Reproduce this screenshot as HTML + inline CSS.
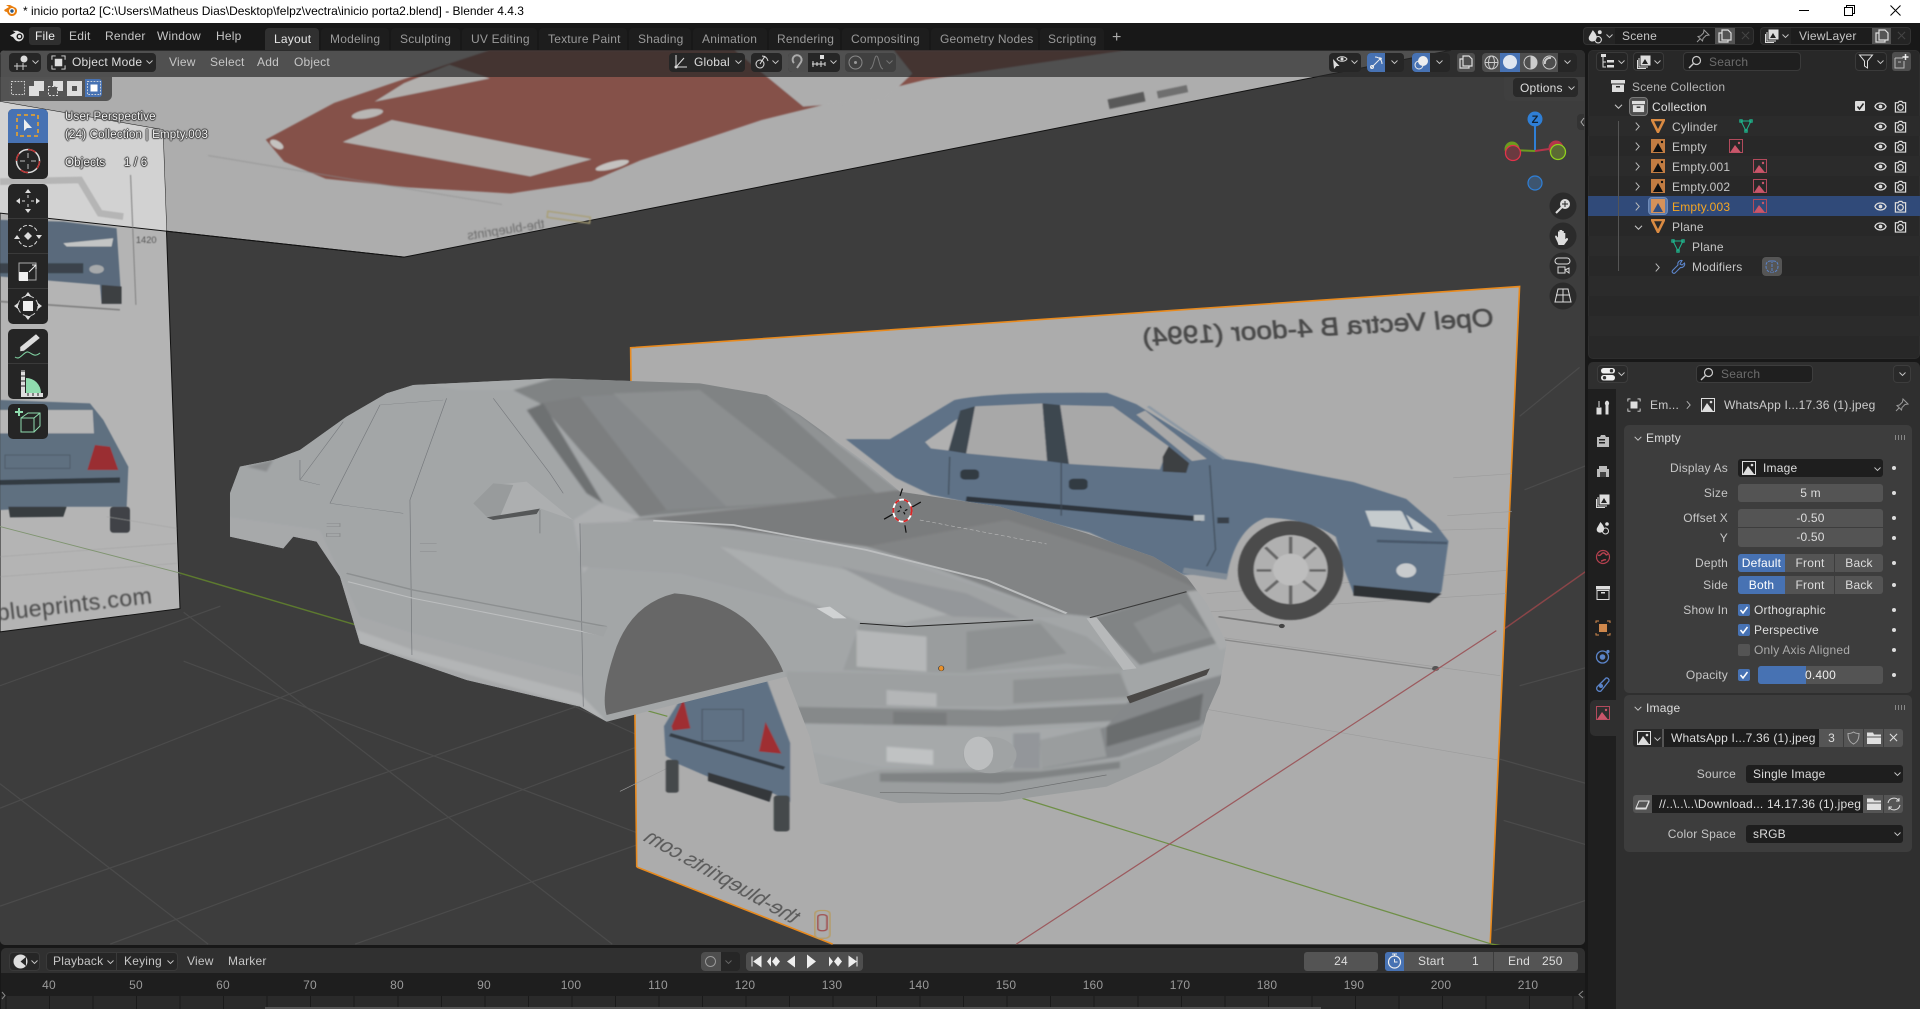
<!DOCTYPE html>
<html><head><meta charset="utf-8"><title>Blender</title>
<style>
html,body{margin:0;padding:0;width:1920px;height:1009px;overflow:hidden;background:#181818;font-family:"Liberation Sans",sans-serif}
.t{position:absolute;white-space:nowrap;font-size:12px;line-height:14px;color:#c6c6c6;letter-spacing:.2px}
.b{position:absolute;box-sizing:border-box}
.d{background:#1d1d1d;border-radius:4px}
.g{background:#545454;border-radius:3px}
.r{text-align:right}
.c{text-align:center}
.o{color:#f4f4f4;text-shadow:0 0 1px #333,0 0 1px #333,1px 0 1px #444,-1px 0 1px #444,0 1px 1px #444,0 -1px 1px #444}
svg.i{position:absolute;overflow:visible}
.row{position:absolute;left:1588px;width:332px;height:20px}
.dot{position:absolute;width:4px;height:4px;border-radius:50%;background:#ddd;left:1892px}
</style></head><body>
<svg width="0" height="0" style="position:absolute"><defs>
<symbol id="img" viewBox="0 0 14 14"><rect x=".5" y=".5" width="13" height="13" fill="none" stroke="currentColor" stroke-width="1"/><path d="M1 13 6 5l6 8z" fill="currentColor"/><circle cx="10" cy="4" r="1.3" fill="currentColor"/></symbol>
<symbol id="eye" viewBox="0 0 14 14"><path d="M1 7c2-5 10-5 12 0-2 5-10 5-12 0z" fill="none" stroke="#ddd" stroke-width="1.4"/><circle cx="7" cy="7" r="2" fill="#ddd"/></symbol>
<symbol id="cam" viewBox="0 0 14 14"><path d="M1.5 3h3l1-1.500h3l1 1.500h3v10h-11z" fill="none" stroke="#ddd" stroke-width="1.3"/><circle cx="7" cy="8" r="3" fill="none" stroke="#ddd" stroke-width="1.3"/></symbol>
<symbol id="tri" viewBox="0 0 14 14"><path d="M1 1h12L7 13z" fill="none" stroke="#d98a42" stroke-width="2.600"/></symbol>
<symbol id="mesh" viewBox="0 0 14 14"><path d="M2 2h10L7 12z" fill="none" stroke="#1fb58d" stroke-width="1"/><rect x="0.800" y="0.800" width="2.400" height="2.400" fill="none" stroke="#1fb58d"/><rect x="10.800" y="0.800" width="2.400" height="2.400" fill="none" stroke="#1fb58d"/><rect x="5.800" y="10.800" width="2.400" height="2.400" fill="none" stroke="#1fb58d"/></symbol>
<symbol id="oimg" viewBox="0 0 14 14"><rect width="14" height="14" fill="#c27c42"/><path d="M2 13 7 4l5 9z" fill="#111"/><circle cx="11" cy="3" r="1.200" fill="#111"/></symbol>
<symbol id="dimg" viewBox="0 0 14 14"><rect x=".5" y=".5" width="13" height="13" fill="none" stroke="#b24a5c"/><path d="M1 13.500 6 6l6 7.500z" fill="#c9566a"/><circle cx="10" cy="4" r="1.200" fill="#c9566a"/></symbol>
<symbol id="coll" viewBox="0 0 14 14"><rect x="0" y="1" width="14" height="3.500" fill="#ddd"/><path d="M1 5.500h12V13H1z" fill="#ddd"/><rect x="5" y="7" width="4" height="1.500" fill="#2b2b2b"/></symbol>
<symbol id="cr" viewBox="0 0 8 12"><path d="M2 1.500 6 6l-4 4.500" fill="none" stroke="#bbb" stroke-width="1.100"/></symbol>
<symbol id="cd" viewBox="0 0 12 8"><path d="M2 2l4 4 4-4" fill="none" stroke="#c8c8c8" stroke-width="1.200"/></symbol>
<symbol id="search" viewBox="0 0 14 14"><circle cx="8.500" cy="5.500" r="4" fill="none" stroke="#ccc" stroke-width="1.200"/><path d="M5.500 8.500 1 13" stroke="#ccc" stroke-width="1.400"/></symbol>
<symbol id="folder" viewBox="0 0 14 14"><path d="M0 1.500h6l1 2h7v2H0z" fill="#e0e0e0"/><path d="M0 6.500h14V13H0z" fill="#e0e0e0"/></symbol>
<symbol id="pin" viewBox="0 0 14 14"><path d="M8 1l5 5-3 .5-3 3L6.500 12 2 7.500 4.500 7l3-3zM4 10l-3 3" fill="none" stroke="#999" stroke-width="1"/></symbol>
<symbol id="copy" viewBox="0 0 14 14"><path d="M4 1h6l3 3v7H4zM4 4H1v9h9v-2" fill="none" stroke="#ddd" stroke-width="1.200"/></symbol>
<symbol id="x" viewBox="0 0 10 10"><path d="M1 1l8 8M9 1l-8 8" stroke="currentColor" stroke-width="1.200"/></symbol>
<symbol id="scene" viewBox="0 0 14 14"><path d="M4.500 1C7 4 8.500 6 8 8.500 7.500 11 5 12 3 11.500 1 11 .2 9 1 7z" fill="#ddd"/><circle cx="11" cy="3" r="1.800" fill="#ddd"/><circle cx="9.500" cy="10" r="3" fill="none" stroke="#ddd"/></symbol>
<symbol id="vl" viewBox="0 0 14 14"><rect x="3.500" y=".5" width="10" height="10" fill="#ddd"/><path d="M5 9l3-5 3 5z" fill="#222"/><path d="M2 3v9h9M.5 5v8.500H9" fill="none" stroke="#ddd"/></symbol>
<symbol id="selb" viewBox="0 0 16 16"><rect x=".5" y=".5" width="15" height="15" fill="none" stroke="#ddd" stroke-dasharray="2 1.500"/></symbol>
</defs></svg>

<!-- title bar -->
<div class="b" style="left:0;top:0;width:1920px;height:23px;background:#fff"></div>
<svg class="i" style="left:3px;top:3px" width="15" height="15" viewBox="0 0 15 15"><path d="M1 7 6 4 3 2h4l6 3a5 5 0 1 1-8 6l-1-2-2-.5z" fill="#e87d0d"/><circle cx="9" cy="8" r="3" fill="#fff"/><circle cx="9" cy="8" r="1.700" fill="#265787"/></svg>
<div class="t" style="left:23px;top:4px;color:#000;letter-spacing:0">* inicio porta2 [C:\Users\Matheus Dias\Desktop\felpz\vectra\inicio porta2.blend] - Blender 4.4.3</div>
<div class="b" style="left:1799px;top:10px;width:10px;height:1px;background:#000"></div>
<svg class="i" style="left:1844px;top:5px" width="11" height="11" viewBox="0 0 11 11"><path d="M.5 2.500h8v8h-8zM2.500 2.500v-2h8v8h-2" fill="none" stroke="#000"/></svg>
<svg class="i" style="left:1890px;top:5px" width="11" height="11" viewBox="0 0 11 11"><path d="M.5.5l10 10M10.500.5l-10 10" stroke="#000"/></svg>

<!-- top bar -->
<div class="b" style="left:0;top:23px;width:1920px;height:27px;background:#181818"></div>
<svg class="i" style="left:9px;top:28px" width="18" height="16" viewBox="0 0 18 16"><path d="M1 7.500 6.500 4.500 3.500 2.700H8.500L14 5.500a5 5 0 1 1-8.500 5.500L4 9 2.500 8.500z" fill="#e4e4e4"/><circle cx="10.500" cy="8.500" r="3" fill="#181818"/><circle cx="10.500" cy="8.500" r="1.600" fill="#e4e4e4"/></svg>
<div class="b" style="left:29px;top:27px;width:32px;height:18px;background:#2f2f2f;border-radius:3px"></div>
<div class="t" style="left:35px;top:29px;color:#eee">File</div>
<div class="t" style="left:69px;top:29px">Edit</div>
<div class="t" style="left:105px;top:29px">Render</div>
<div class="t" style="left:157px;top:29px">Window</div>
<div class="t" style="left:216px;top:29px">Help</div>
<div class="b" style="left:265px;top:28px;width:54px;height:22px;background:#303030;border-radius:4px 4px 0 0"></div>
<div class="b" style="left:321px;top:28px;width:68px;height:22px;background:#1d1d1d;border-radius:4px 4px 0 0"></div>
<div class="b" style="left:391px;top:28px;width:69px;height:22px;background:#1d1d1d;border-radius:4px 4px 0 0"></div>
<div class="b" style="left:462px;top:28px;width:75px;height:22px;background:#1d1d1d;border-radius:4px 4px 0 0"></div>
<div class="b" style="left:539px;top:28px;width:88px;height:22px;background:#1d1d1d;border-radius:4px 4px 0 0"></div>
<div class="b" style="left:629px;top:28px;width:62px;height:22px;background:#1d1d1d;border-radius:4px 4px 0 0"></div>
<div class="b" style="left:693px;top:28px;width:74px;height:22px;background:#1d1d1d;border-radius:4px 4px 0 0"></div>
<div class="b" style="left:769px;top:28px;width:71px;height:22px;background:#1d1d1d;border-radius:4px 4px 0 0"></div>
<div class="b" style="left:842px;top:28px;width:87px;height:22px;background:#1d1d1d;border-radius:4px 4px 0 0"></div>
<div class="b" style="left:931px;top:28px;width:107px;height:22px;background:#1d1d1d;border-radius:4px 4px 0 0"></div>
<div class="b" style="left:1040px;top:28px;width:64px;height:22px;background:#1d1d1d;border-radius:4px 4px 0 0"></div>
<div class="t" style="left:274px;top:32px;color:#e6e6e6">Layout</div>
<div class="t" style="left:330px;top:32px;color:#9a9a9a">Modeling</div>
<div class="t" style="left:400px;top:32px;color:#9a9a9a">Sculpting</div>
<div class="t" style="left:471px;top:32px;color:#9a9a9a">UV Editing</div>
<div class="t" style="left:548px;top:32px;color:#9a9a9a">Texture Paint</div>
<div class="t" style="left:638px;top:32px;color:#9a9a9a">Shading</div>
<div class="t" style="left:702px;top:32px;color:#9a9a9a">Animation</div>
<div class="t" style="left:777px;top:32px;color:#9a9a9a">Rendering</div>
<div class="t" style="left:851px;top:32px;color:#9a9a9a">Compositing</div>
<div class="t" style="left:940px;top:32px;color:#9a9a9a">Geometry Nodes</div>
<div class="t" style="left:1048px;top:32px;color:#9a9a9a">Scripting</div>
<div class="t" style="left:1112px;top:31px;color:#aaa;font-size:16px">+</div>

<div class="b d" style="left:1583px;top:27px;width:171px;height:18px;background:#242424;border:1px solid #333"></div>
<div class="b" style="left:1615px;top:28px;width:100px;height:16px;background:#1d1d1d"></div>
<svg class="i" style="left:1588px;top:29px;color:#ddd" width="15" height="15"><use href="#scene"/></svg>
<svg class="i" style="left:1605px;top:33px" width="9" height="6"><use href="#cd"/></svg>
<div class="t" style="left:1622px;top:29px">Scene</div>
<svg class="i" style="left:1696px;top:29px" width="14" height="14"><use href="#pin"/></svg>
<div class="b g" style="left:1715px;top:28px;width:20px;height:16px;border-radius:0"></div>
<svg class="i" style="left:1718px;top:29px" width="14" height="14"><use href="#copy"/></svg>
<svg class="i" style="left:1741px;top:31px;color:#444" width="9" height="9"><use href="#x"/></svg>
<div class="b d" style="left:1760px;top:27px;width:151px;height:18px;background:#242424;border:1px solid #333"></div>
<div class="b" style="left:1791px;top:28px;width:81px;height:16px;background:#1d1d1d"></div>
<svg class="i" style="left:1765px;top:29px;color:#ddd" width="14" height="14"><use href="#vl"/></svg>
<svg class="i" style="left:1781px;top:33px" width="9" height="6"><use href="#cd"/></svg>
<div class="t" style="left:1799px;top:29px">ViewLayer</div>
<div class="b g" style="left:1872px;top:28px;width:19px;height:16px;border-radius:0"></div>
<svg class="i" style="left:1875px;top:29px" width="14" height="14"><use href="#copy"/></svg>
<svg class="i" style="left:1897px;top:31px;color:#444" width="9" height="9"><use href="#x"/></svg>

<!-- 3D viewport -->
<div class="b" style="left:0;top:50px;width:1585px;height:895px;overflow:hidden;border-radius:5px;background:#3d3d3d">
<svg style="position:absolute;left:0;top:-50px" width="1920" height="1009" viewBox="0 0 1568 824">
<defs>
<filter id="bl" x="-5%" y="-5%" width="110%" height="110%"><feGaussianBlur stdDeviation=".7"/></filter>
<filter id="bl2" x="-5%" y="-5%" width="110%" height="110%"><feGaussianBlur stdDeviation="1.200"/></filter>
<filter id="mb" x="-5%" y="-5%" width="110%" height="110%"><feGaussianBlur stdDeviation="1.500 3"/></filter>
<clipPath id="mc"><polygon points="45,530 45,400 60,320 110,300 150,270 220,170 280,100 320,75 530,55 750,70 850,105 900,165 1000,310 1050,395 1200,440 1330,520 1430,590 1480,650 1510,730 1540,850 1530,970 1510,1060 1500,1140 1440,1210 1360,1280 1200,1325 1050,1330 930,1270 915,1130 880,950 610,1085 570,1040 400,960 240,850 210,650 175,545 140,530 125,565"/></clipPath>
</defs>
<rect width="1568" height="824" fill="#3d3d3d"/>
<!-- floor grid -->
<g stroke="#4b4b4b" stroke-width="1" fill="none">
<path d="M0 660 520 455M0 740 520 560M90 771 520 610M290 771 520 690M0 560 180 495M148 470 0 430"/>
<path d="M0 640 170 771M150 500 500 771M300 500 520 600M150 540 520 680"/>
<path d="M1241 560 1296 545M1228 670 1296 690M1225 620 1296 640M1290 300 1241 340M1245 400 1296 380M1220 760 1296 735"/>
</g>
<path d="M147 468 520 578" stroke="#5d7a2f" stroke-width="1.200"/>
<path d="M1218 771 1296 785" stroke="#6d8f2f" stroke-width="1.200"/>
<path d="M1296 466 1225 516" stroke="#8a4548" stroke-width="1.200"/>

<!-- ceiling plane -->
<polygon points="0,41 1185,41 330,210 0,174" fill="#adadad" stroke="#111" stroke-width=".8"/>
<g filter="url(#bl)">
<polygon points="217,114 232,132 266,146 333,153 417,158 483,148 523,131 622,98 756,65 919,41 400,41 367,52 273,84" fill="#85514a"/>
<polygon points="280,116 433,144 483,130 320,98" fill="#b2b0ae"/>
<polygon points="306,83 400,64 367,53 330,68" fill="#b2b0ae"/>
<polygon points="600,41 656,87 722,82 745,60 730,41" fill="#adadad"/>
<ellipse cx="300" cy="93" rx="13" ry="3.500" fill="#b8b6b4" transform="rotate(-10 300 93)"/>
<ellipse cx="226" cy="118" rx="6" ry="3" fill="#c4c2c0" transform="rotate(30 226 118)"/>
<ellipse cx="500" cy="135" rx="14" ry="3" fill="#c4c2c0" transform="rotate(-14 500 135)"/>
<path d="M170 127 410 167" stroke="#8a8a8a" stroke-width=".7" fill="none" opacity=".7"/>
<text transform="translate(445 186) rotate(-9) scale(-1 1)" font-size="10.500" fill="#6a6a6a" font-family="Liberation Sans, sans-serif">the-blueprints</text>
<rect x="447" y="175" width="35" height="5" fill="none" stroke="#a89e72" stroke-width="1.100" transform="rotate(8 465 177)"/>
<rect x="905" y="78" width="30" height="8" fill="#444" transform="rotate(-12 920 82)" opacity=".8"/>
<rect x="945" y="72" width="25" height="6" fill="#555" transform="rotate(-12 957 75)" opacity=".7"/>
</g>

<!-- left plane -->
<polygon points="0,83 133,106 147,497 0,516" fill="#b4b4b4" stroke="#111" stroke-width=".8"/>
<polygon points="0,83 133,106 136,189 0,174" fill="#d2d2d2"/>
<path d="M0 174 330 210" stroke="#111" stroke-width=".8"/>
<g transform="translate(0 81.670) scale(.272)" filter="url(#bl2)">
<path d="M0 245 240 240 300 340 370 350" fill="none" stroke="#b5b5b5" stroke-width="20"/>
<polygon points="0,360 190,365 350,385 365,610 305,610 300,555 0,530" fill="#5a6a7c"/>
<polygon points="190,430 340,415 335,440 200,440" fill="#c3c5c5"/>
<polygon points="0,490 250,490 250,520 0,520" fill="#3a424c"/>
<ellipse cx="290" cy="508" rx="22" ry="13" fill="#a6a9ab"/>
<polygon points="305,555 365,560 365,612 305,612" fill="#3c3f43"/>
<path d="M0 605 360 630" stroke="#808080" stroke-width="5"/>
<path d="M392 225 408 615" stroke="#808080" stroke-width="3"/>
<text x="408" y="430" font-size="28" fill="#555" font-family="Liberation Sans, sans-serif">1420</text>
</g>
<g transform="translate(0 326.700) scale(.2722)" filter="url(#bl2)">
<polygon points="0,0 270,10 310,60 385,200 380,320 335,320 200,320 0,330" fill="#5f6f80"/>
<polygon points="0,30 278,30 282,100 0,100" fill="#b6b6b6"/>
<polygon points="285,135 330,140 355,210 262,210" fill="#9a2e32"/>
<polygon points="0,240 360,232 360,248 0,255" fill="#333a42"/>
<rect x="330" y="320" width="60" height="78" rx="10" fill="#3f4347"/>
<polygon points="25,320 200,320 190,350 30,352" fill="#393c40"/>
<rect x="15" y="165" width="195" height="40" fill="none" stroke="#4f5c6a" stroke-width="3"/>
<path d="M0 530 530 490M320 350 530 385M0 470 530 430" stroke="#a0a0a0" stroke-width="1.500" fill="none"/>
</g>
<path d="M0 430 147 468" stroke="#7f9470" stroke-width=".8"/>
<text transform="translate(-2 507) rotate(-6.500)" font-size="19" font-family="Liberation Sans, sans-serif" fill="#4a4a4a" filter="url(#bl)" letter-spacing=".3">blueprints.com</text>

<!-- right plane -->
<polygon points="515,284 1241,234 1217,771 680,771 520,708" fill="#acacac"/>
<path d="M520 708 515 284 1241 234 1217 771M520 708 680 771" fill="none" stroke="#e88a1e" stroke-width="1.300"/>
<g transform="translate(506.300 228.700) scale(.4792 .3437)">
<g stroke="#9c9c9c" stroke-width="1.500" fill="none"><path d="M1000 745 1510 690M1030 850 1500 940M1000 1020 1495 1140M985 790 1510 745M1410 560 1520 550M1420 470 1520 460M0 1215 110 1140M1250 600 1510 590"/></g>
<path d="M1020 800 1130 822" stroke="#777" stroke-width="4" filter="url(#bl)"/><circle cx="1128" cy="822" r="5" fill="#444"/>
<path d="M1030 855 1390 925" stroke="#888" stroke-width="3" filter="url(#bl)"/><circle cx="1390" cy="923" r="6" fill="#555"/>
<g filter="url(#bl2)">
<path d="M385 378 460 378 570 285Q640 265 830 268L880 295 1030 425 1080 435 1250 480 1340 520 1390 580 1412 620 1400 740 1380 765 1250 745 1235 690 1220 610Q1170 565 1100 565 1050 590 1035 700L960 700 800 600 600 530 530 510 470 470Z" fill="#5e7287"/>
<polygon points="520,385 575,330 560,405 530,400" fill="#b0b0b0"/>
<polygon points="605,300 720,293 728,430 590,412" fill="#a8a8a8"/>
<polygon points="750,297 840,300 935,395 920,450 765,437" fill="#a8a8a8"/>
<polygon points="580,310 605,300 590,412 560,405" fill="#3e4650"/>
<polygon points="720,293 750,297 765,437 728,430" fill="#3e4650"/>
<polygon points="925,420 935,395 970,435 965,458 925,455" fill="#3d3f42"/>
<path d="M900 300 1030 425" stroke="#8d99a4" stroke-width="5"/>
<polygon points="895,310 1000,425 975,430 880,320" fill="#a8a8a8"/>
<path d="M590 520 990 568" stroke="#2d353e" stroke-width="12"/>
<rect x="978" y="558" width="18" height="14" fill="#b5bcc0"/><rect x="1018" y="564" width="20" height="14" fill="#39414a"/>
<rect x="580" y="450" width="32" height="24" rx="8" fill="#333a42"/><rect x="765" y="472" width="32" height="26" rx="8" fill="#333a42"/>
<path d="M562 420 560 510M752 430 752 560M1005 440 1015 640 1000 680" stroke="#3f4a55" stroke-width="2" fill="none"/>
<path d="M960 690 1035 705" stroke="#818c97" stroke-width="14"/>
<ellipse cx="1143" cy="690" rx="90" ry="118" fill="#4b4b4b"/>
<ellipse cx="1143" cy="688" rx="63" ry="82" fill="#b0b0b0"/>
<g stroke="#666" stroke-width="6"><path d="M1143 610V650M1143 725V770M1085 690H1110M1175 690H1203M1100 635 1125 668M1186 740 1160 710M1186 635 1160 668M1100 740 1125 710"/></g>
<ellipse cx="1143" cy="688" rx="30" ry="38" fill="#bdbdbd"/>
<polygon points="1270,548 1330,548 1385,600 1280,585" fill="#c5cbcd"/>
<path d="M1335 550 1350 592" stroke="#5e7287" stroke-width="4"/>
<path d="M1290 620 1410 625" stroke="#48586a" stroke-width="6"/>
<circle cx="1340" cy="690" r="17" fill="#c8cbcd"/>
<polygon points="1250,725 1400,745 1380,767 1250,750" fill="#2f3236"/>
<!-- rear car -->
<polygon points="75,1060 108,985 250,950 290,1100 290,1240 262,1220 150,1180 100,1150 78,1130" fill="#5f7184"/>
<polygon points="88,1060 108,995 120,1065 90,1070" fill="#9f2e30"/>
<polygon points="237,1120 248,1050 275,1125" fill="#9f2e30"/>
<rect x="140" y="1020" width="70" height="75" fill="none" stroke="#4c5866" stroke-width="2"/>
<path d="M85 1080 280 1160" stroke="#363d45" stroke-width="8"/>
<rect x="78" y="1140" width="22" height="78" rx="5" fill="#45484b"/>
<rect x="262" y="1225" width="27" height="85" rx="6" fill="#45484b"/>
<polygon points="150,1170 260,1215 255,1240 150,1190" fill="#34373b"/>
<text transform="translate(1490 110) rotate(-4.500) scale(-1 1)" font-size="60" font-family="Liberation Sans, sans-serif" fill="#4a4a4a" stroke="#4a4a4a" stroke-width="1.500" textLength="600" lengthAdjust="spacingAndGlyphs">Opel Vectra B 4-door (1994)</text>
</g>
<text transform="translate(293 1530) rotate(38) scale(-1 1)" font-size="46" font-family="Liberation Sans, sans-serif" fill="#5a5a5a" textLength="325" lengthAdjust="spacingAndGlyphs" filter="url(#bl)">the-blueprints.com</text>
<rect x="332" y="1498" width="26" height="66" rx="9" fill="none" stroke="#b59d68" stroke-width="3" filter="url(#bl)"/>
<rect x="337" y="1508" width="16" height="38" rx="6" fill="none" stroke="#a05050" stroke-width="3" filter="url(#bl)"/>
</g>
<!-- axes over plane -->
<path d="M520 578 545 585M835 652 1218 771" stroke="#6f8f47" stroke-width="1"/>
<path d="M1222 515 830 771" stroke="#9c5a5e" stroke-width="1"/>

<!-- car mesh -->
<g transform="translate(163.300 294) scale(.5444 .2722)">
<g clip-path="url(#mc)"><rect x="0" y="0" width="1600" height="1400" fill="#a3a6a7"/>
<g filter="url(#mb)">
<polygon points="0,0 1600,0 1600,1400 0,1400" fill="#a3a6a7"/>
<polygon points="70,320 110,300 100,335" fill="#8a8c8d"/>
<polygon points="40,570 125,565 140,530 175,545 210,650 240,850 400,960 570,1040 575,950 320,820 240,770 205,620 180,510 40,470" fill="#a7a9aa"/>
<polygon points="240,850 570,1040 610,1085 570,1000 320,870 235,810" fill="#b3b5b6"/>
<polygon points="300,60 530,40 600,70 515,120 470,90 390,90" fill="#a7aaab"/>
<polygon points="470,90 530,55 750,50 870,90 1040,410 890,430 660,470 570,270 510,130" fill="#808384"/>
<polygon points="510,130 570,110 700,450 660,470" fill="#7b7e7f"/>
<polygon points="570,110 720,92 880,430 700,450" fill="#85888a"/>
<polygon points="620,100 750,90 960,420 790,440" fill="#8c8f90"/>
<polygon points="490,150 515,130 605,430 580,400" fill="#6e7172"/>
<polygon points="850,105 900,165 1050,395 1020,410" fill="#909394"/>
<polygon points="560,480 600,430 660,470 640,490 575,640" fill="#adafb0"/>
<polygon points="570,490 680,482 1000,570 1300,770 1050,790 990,785 880,720 800,680 720,640 570,620" fill="#a0a3a4"/>
<polygon points="780,560 1000,640 1130,760 1050,790 990,785 880,700" fill="#abaeaf"/>
<polygon points="960,620 1150,700 1230,775 1130,770 1040,700" fill="#94979a"/>
<polygon points="640,480 890,430 1050,390 1220,430 1340,510 1440,590 1500,680 1340,770 1290,760 1100,620 1000,560 680,478" fill="#7a7c7d"/>
<polygon points="1000,560 1210,480 1400,600 1500,690 1340,770 1290,760 1100,620" fill="#828485"/>
<polygon points="965,930 990,790 1060,800 1260,780 1330,830 1390,930 1300,910 1150,940" fill="#9a9d9e"/>
<polygon points="985,810 1090,830 1090,935 985,920" fill="#b5b7b8"/>
<polygon points="1150,815 1260,790 1300,880 1150,930" fill="#8e9192"/>
<polygon points="1340,775 1480,695 1560,830 1410,915" fill="#818485"/>
<polygon points="1400,790 1470,730 1520,830 1430,880" fill="#8c8f90"/>
<polygon points="1480,695 1500,690 1560,850 1530,870" fill="#a9abac"/>
<polygon points="880,935 1150,945 1380,920 1395,1020 1200,1040 1000,1040 880,1040" fill="#9da0a1"/>
<polygon points="1030,990 1105,1000 1105,1040 1030,1035" fill="#b4b6b7"/>
<polygon points="1220,960 1380,940 1395,1010 1220,1030" fill="#8f9293"/>
<polygon points="880,1040 1200,1050 1395,1030 1400,1080 1200,1100 900,1090" fill="#86898a"/>
<polygon points="1040,1055 1120,1058 1120,1096 1040,1092" fill="#797c7d"/>
<polygon points="900,1090 1200,1110 1360,1100 1260,1150 1260,1230 1020,1220 900,1170" fill="#a6a9aa"/>
<polygon points="1030,1160 1100,1170 1100,1215 1030,1205" fill="#c0c2c3"/>
<polygon points="1220,1120 1260,1118 1260,1225 1220,1225" fill="#93969a"/>
<polygon points="900,1290 1020,1230 1260,1225 1380,1200 1540,1100 1360,1320 1200,1350 1050,1350" fill="#9a9d9e"/>
<polygon points="1020,1240 1260,1235 1380,1205 1380,1225 1200,1270 1020,1265" fill="#808384"/>
<polygon points="1395,1020 1560,930 1560,1000 1500,1100 1380,1190 1265,1225 1260,1150 1360,1100" fill="#85888a"/>
<polygon points="1360,1100 1505,1000 1500,1080 1360,1160" fill="#6a6d6e"/>
<polygon points="1260,1140 1350,1100 1360,1190 1262,1225" fill="#9a9d9e"/>
</g></g>
<polyline points="680,482 800,495 1000,570 1180,660 1300,760" fill="none" stroke="#bcbebf" stroke-width="5"/>
<polygon points="925,745 945,740 970,775 950,775" fill="#d0d2d3"/>
<polygon points="1330,775 1345,772 1405,925 1385,930" fill="#b7b9ba"/>
<polygon points="1390,1010 1515,925 1510,945 1395,1030" fill="#4a4846"/>
<polyline points="1020,1297 1200,1302 1360,1245" fill="none" stroke="#6a6c6d" stroke-width="2"/>
<ellipse cx="1185" cy="1185" rx="40" ry="55" fill="#a0a3a4"/>
<ellipse cx="1168" cy="1180" rx="22" ry="50" fill="#bcbebf"/>
<path d="M712 700Q780 710 825 790 860 860 875 935L610 1065Q600 1000 625 860 650 730 712 700Z" fill="#676767"/>
<polyline points="990,790 1060,800 1250,780" fill="none" stroke="#262626" stroke-width="3"/>
<polyline points="1335,773 1480,695" fill="none" stroke="#3a3a3a" stroke-width="3"/>
<g fill="none" stroke="#73767a" stroke-width="1">
<path d="M370 115 315 420 318 885M570 490 575 1040M195 430 270 135 365 120M440 115 525 340 545 400M150 360 215 185M150 300 150 360 180 375M195 430 305 460M510 450 510 520"/>
</g>
<polyline points="220,640 320,690 610,800" fill="none" stroke="#8c8f90" stroke-width="4"/>
<polyline points="222,665 320,715 600,825" fill="none" stroke="#bcbebf" stroke-width="3"/>
<polygon points="575,795 612,800 605,830 575,815" fill="#a0a3a4"/>
<polygon points="410,430 440,375 490,365 560,480 510,445 440,470" fill="#adafb0"/>
<polygon points="410,430 440,370 470,375 450,470 430,470" fill="#989b9c"/>
<polygon points="430,472 510,446 505,462 440,480" fill="#555758"/>
<path d="M190 520h20v10h-20zM190 490h20v10h-20M330 550h25M330 575h25" fill="none" stroke="#8a8c8d" stroke-width="1.500"/>
<path d="M1080 480 1270 552" stroke="#c0c0c0" stroke-width="1.500" stroke-dasharray="6 4"/>
<ellipse cx="1112" cy="925" rx="4" ry="8" fill="#e8902a" stroke="#333"/>
</g>
<!-- 3D cursor -->
<g transform="translate(737 417)">
<ellipse rx="7.500" ry="9" fill="none" stroke="#fff" stroke-width="1.500"/>
<ellipse rx="7.500" ry="9" fill="none" stroke="#d92626" stroke-width="1.500" stroke-dasharray="4 4"/>
<path d="M-2-12 0-18M2 12 3 18M-8 3-15 7M8-3 15-7M-2-4-1-2M2 3 1 1M-4 1-2 0M4-1 2 0" stroke="#111" stroke-width="1"/>
</g>
</svg>
</div>

<!-- viewport header -->
<div class="b" style="left:0;top:50px;width:1585px;height:27px;background:rgba(40,40,40,.7);border-radius:5px 5px 0 0"></div>
<div class="b d" style="left:9px;top:53px;width:32px;height:19px;background:#262626"></div>
<svg class="i" style="left:13px;top:54px" width="17" height="17" viewBox="0 0 17 17"><path d="M1 12h13M4 9v7M10 9v7" stroke="#ccc" fill="none"/><circle cx="11" cy="5" r="3.500" fill="#ddd"/></svg>
<svg class="i" style="left:31px;top:59px" width="9" height="6"><use href="#cd"/></svg>
<div class="b d" style="left:47px;top:53px;width:109px;height:19px;background:#262626"></div>
<svg class="i" style="left:51px;top:55px" width="15" height="15" viewBox="0 0 16 16"><path d="M1 5V1h4M11 1h4v4M15 11v4h-4M5 15H1v-4" fill="none" stroke="#ddd"/><rect x="4" y="4" width="8" height="8" fill="#ddd"/></svg>
<div class="t" style="left:72px;top:55px;color:#ddd">Object Mode</div>
<svg class="i" style="left:145px;top:59px" width="9" height="6"><use href="#cd"/></svg>
<div class="t" style="left:169px;top:55px">View</div>
<div class="t" style="left:210px;top:55px">Select</div>
<div class="t" style="left:257px;top:55px">Add</div>
<div class="t" style="left:294px;top:55px">Object</div>

<div class="b d" style="left:669px;top:53px;width:76px;height:19px;background:#262626"></div>
<svg class="i" style="left:673px;top:54px" width="16" height="16" viewBox="0 0 16 16"><path d="M3 1v12h11M3 13 11 4" stroke="#ddd" fill="none"/><circle cx="3" cy="13" r="1.500" fill="#ddd"/></svg>
<div class="t" style="left:694px;top:55px;color:#ddd">Global</div>
<svg class="i" style="left:734px;top:59px" width="9" height="6"><use href="#cd"/></svg>
<div class="b d" style="left:751px;top:53px;width:31px;height:19px;background:#262626"></div>
<svg class="i" style="left:755px;top:54px" width="15" height="16" viewBox="0 0 15 16"><circle cx="5" cy="10" r="4" fill="none" stroke="#ddd"/><path d="M7 2a6 6 0 0 1 6 5" fill="none" stroke="#ddd"/><path d="M5 10 10 2" stroke="#ddd"/></svg>
<svg class="i" style="left:771px;top:59px" width="9" height="6"><use href="#cd"/></svg>
<div class="b" style="left:788px;top:53px;width:52px;height:19px;background:#262626;border-radius:4px"></div>
<div class="b" style="left:788px;top:53px;width:20px;height:19px;background:#4e4e4e;border-radius:4px 0 0 4px"></div>
<svg class="i" style="left:791px;top:55px" width="14" height="15" viewBox="0 0 14 15"><path d="M3 8a4.500 4.500 0 1 1 7-1L6 13" fill="none" stroke="#aaa" stroke-width="2"/></svg>
<svg class="i" style="left:811px;top:55px" width="16" height="15" viewBox="0 0 16 15"><rect x="9" y="0" width="4" height="4" fill="#ddd"/><path d="M1 9h13M2 6v6M6 7v4M10 6v6M14 7v4" stroke="#ddd" fill="none"/></svg>
<svg class="i" style="left:829px;top:59px" width="9" height="6"><use href="#cd"/></svg>
<div class="b" style="left:845px;top:53px;width:51px;height:19px;background:rgba(60,60,60,.8);border-radius:4px"></div>
<svg class="i" style="left:848px;top:55px" width="15" height="15" viewBox="0 0 15 15"><circle cx="7.500" cy="7.500" r="6.500" fill="none" stroke="#888"/><circle cx="7.500" cy="7.500" r="1.500" fill="#999"/></svg>
<svg class="i" style="left:869px;top:55px" width="15" height="15" viewBox="0 0 15 15"><path d="M1 14C5 13 5 1 7.500 1S10 13 14 14" fill="none" stroke="#777"/></svg>
<svg class="i" style="left:885px;top:59px;opacity:.4" width="9" height="6"><use href="#cd"/></svg>

<!-- right side header -->
<div class="b d" style="left:1329px;top:53px;width:32px;height:19px;background:#262626"></div>
<svg class="i" style="left:1332px;top:54px" width="16" height="16" viewBox="0 0 16 16"><path d="M5 5c2-3 8-3 10 0-2 3-8 3-10 0z" fill="none" stroke="#ddd"/><circle cx="10" cy="5" r="1.500" fill="#ddd"/><path d="M1 5l1 10 2.500-3 3 0z" fill="#ddd"/></svg>
<svg class="i" style="left:1350px;top:59px" width="9" height="6"><use href="#cd"/></svg>
<div class="b" style="left:1367px;top:53px;width:37px;height:19px;background:#262626;border-radius:4px"></div>
<div class="b" style="left:1367px;top:53px;width:18px;height:19px;background:#4772b3;border-radius:4px 0 0 4px"></div>
<svg class="i" style="left:1369px;top:55px" width="15" height="15" viewBox="0 0 15 15"><path d="M2 13 12 3M6 2c4 0 7 3 7 7" fill="none" stroke="#eee"/><circle cx="3" cy="12" r="1.500" fill="none" stroke="#eee"/><path d="M10 2l3 1-1 3" fill="#eee"/></svg>
<svg class="i" style="left:1390px;top:59px" width="9" height="6"><use href="#cd"/></svg>
<div class="b" style="left:1412px;top:53px;width:38px;height:19px;background:#262626;border-radius:4px"></div>
<div class="b" style="left:1412px;top:53px;width:18px;height:19px;background:#4772b3;border-radius:4px 0 0 4px"></div>
<svg class="i" style="left:1414px;top:55px" width="15" height="15" viewBox="0 0 15 15"><circle cx="9" cy="6" r="5" fill="#eee"/><circle cx="5" cy="10" r="4" fill="none" stroke="#eee"/></svg>
<svg class="i" style="left:1435px;top:59px" width="9" height="6"><use href="#cd"/></svg>
<div class="b g" style="left:1457px;top:53px;width:18px;height:19px;background:#4e4e4e"></div>
<svg class="i" style="left:1459px;top:55px" width="14" height="14"><use href="#copy"/></svg>
<div class="b" style="left:1482px;top:53px;width:95px;height:19px;background:#4e4e4e;border-radius:4px"></div>
<div class="b" style="left:1500px;top:53px;width:20px;height:19px;background:#4772b3"></div>
<div class="b" style="left:1558px;top:53px;width:19px;height:19px;background:#262626;border-radius:0 4px 4px 0"></div>
<svg class="i" style="left:1484px;top:55px" width="15" height="15" viewBox="0 0 15 15"><circle cx="7.500" cy="7.500" r="6.500" fill="none" stroke="#ccc"/><ellipse cx="7.500" cy="7.500" rx="3" ry="6.500" fill="none" stroke="#ccc"/><path d="M1 7.500h13" stroke="#ccc"/></svg>
<div class="b" style="left:1503px;top:55px;width:14px;height:14px;border-radius:50%;background:#dfe6f0"></div>
<svg class="i" style="left:1523px;top:55px" width="15" height="15" viewBox="0 0 15 15"><circle cx="7.500" cy="7.500" r="6.500" fill="none" stroke="#ccc"/><path d="M7.500 1a6.500 6.500 0 0 1 0 13z" fill="#ccc"/></svg>
<svg class="i" style="left:1542px;top:55px" width="15" height="15" viewBox="0 0 15 15"><circle cx="7.500" cy="7.500" r="6.500" fill="none" stroke="#ccc"/><path d="M3 9a5 5 0 0 1 6-6" fill="none" stroke="#ccc" stroke-width="2"/></svg>
<svg class="i" style="left:1563px;top:59px" width="9" height="6"><use href="#cd"/></svg>
<div class="b" style="left:1504px;top:77px;width:80px;height:24px;background:#3f3f3f;border-radius:0 0 0 5px"></div>
<div class="b d" style="left:1513px;top:78px;width:65px;height:19px;background:#292929"></div>
<div class="t" style="left:1520px;top:81px;color:#ddd">Options</div>
<svg class="i" style="left:1567px;top:85px" width="9" height="6"><use href="#cd"/></svg>

<!-- tool options row -->
<div class="b" style="left:0;top:77px;width:112px;height:24px;background:rgba(60,60,60,.8);border-radius:0 0 6px 0"></div>
<div class="b" style="left:9px;top:79px;width:93px;height:18px;background:#555;border-radius:3px"></div>
<div class="b" style="left:85px;top:79px;width:17px;height:18px;background:#4772b3;border-radius:0 3px 3px 0"></div>
<svg class="i" style="left:11px;top:81px" width="14" height="14" viewBox="0 0 16 16"><use href="#selb"/></svg>
<svg class="i" style="left:29px;top:81px" width="15" height="15" viewBox="0 0 15 15"><path d="M5 0h10v10H10v5H0V5h5z" fill="#ddd"/></svg>
<svg class="i" style="left:48px;top:81px" width="15" height="15" viewBox="0 0 15 15"><path d="M5 0h10v10H5z" fill="#ddd"/><rect x=".5" y="5.500" width="9" height="9" fill="#555" stroke="#ddd" stroke-dasharray="2 1.500"/></svg>
<svg class="i" style="left:67px;top:81px" width="15" height="15" viewBox="0 0 15 15"><path d="M0 0h15v15H0zM5 5v5h5V5z" fill="#ddd" fill-rule="evenodd"/></svg>
<svg class="i" style="left:87px;top:81px" width="14" height="14" viewBox="0 0 16 16"><use href="#selb"/><rect x="4" y="4" width="8" height="8" fill="#fff"/></svg>

<!-- overlay text -->
<div class="t o" style="left:65px;top:110px;font-size:11.500px">User Perspective</div>
<div class="t o" style="left:65px;top:128px;font-size:11.500px">(24) Collection | Empty.003</div>
<div class="t o" style="left:65px;top:156px;font-size:11.500px">Objects</div>
<div class="t o" style="left:124px;top:156px;font-size:11.500px">1 / 6</div>

<!-- toolbar -->
<div class="b" style="left:8px;top:109px;width:40px;height:70px;background:#252525;border-radius:5px;overflow:hidden"><div style="height:34px;background:#4772b3"></div></div>
<div class="b" style="left:8px;top:184px;width:40px;height:140px;background:#252525;border-radius:5px"></div>
<div class="b" style="left:8px;top:218px;width:40px;height:1px;background:#3a3a3a"></div>
<div class="b" style="left:8px;top:253px;width:40px;height:1px;background:#3a3a3a"></div>
<div class="b" style="left:8px;top:288px;width:40px;height:1px;background:#3a3a3a"></div>
<div class="b" style="left:8px;top:329px;width:40px;height:70px;background:#252525;border-radius:5px"></div>
<div class="b" style="left:8px;top:363px;width:40px;height:1px;background:#3a3a3a"></div>
<div class="b" style="left:8px;top:404px;width:40px;height:35px;background:#252525;border-radius:5px"></div>
<svg class="i" style="left:8px;top:109px" width="40" height="330" viewBox="0 0 40 330">
<rect x="9" y="6" width="21" height="21" fill="none" stroke="#f5a623" stroke-width="1.500" stroke-dasharray="4 3"/>
<path d="M16 10v12l3-3 5 0z" fill="#eee"/>
<circle cx="20" cy="52" r="11.500" fill="none" stroke="#ddd" stroke-width="1.500"/><circle cx="20" cy="52" r="11.500" fill="none" stroke="#b33" stroke-width="1.500" stroke-dasharray="8 10"/>
<path d="M20 44v5M20 55v5M12 52h5M23 52h5" stroke="#bbb"/>
<path d="M20 80l-3 4h6zM20 104l-3-4h6zM8 92l4-3v6zM32 92l-4-3v6z" fill="#ddd"/><path d="M14 92h3M23 92h3M20 86v3M20 95v3" stroke="#ddd"/>
<path d="M11 122a10 10 0 0 1 18 0M11 132a10 10 0 0 0 18 0" fill="none" stroke="#ddd" stroke-dasharray="4 2"/><path d="M20 123l4 4-4 4-4-4z" fill="#ddd"/><path d="M6 130l3-4 3 4zM28 126l3 4 3-4z" fill="#ddd"/>
<rect x="11" y="154" width="17" height="17" fill="none" stroke="#aaa"/><rect x="11" y="163" width="9" height="9" fill="#eee"/><path d="M21 163l7-7M24 156h4v4" stroke="#eee" fill="none"/>
<circle cx="20" cy="197" r="10" fill="none" stroke="#ccc" stroke-dasharray="5 3"/><rect x="15" y="192" width="10" height="10" fill="#eee"/><path d="M20 183l-3 4h6zM20 211l-3-4h6zM6 197l4-3v6zM34 197l-4-3v6z" fill="#ddd"/>
<path d="M12 238 28 225l4 4-16 13-4 .5z" fill="#ddd" stroke="#333" stroke-width=".5"/><path d="M7 248c5 4 9-6 13-5s6 6 12 1" fill="none" stroke="#7fd0a0" stroke-width="1.100"/>
<path d="M15 261v25h20" fill="none" stroke="#ddd" stroke-width="4"/><path d="M13 262h4M13 267h4M13 272h4M13 277h4M20 284v3M25 284v3M30 284v3" stroke="#252525"/><path d="M18 284v-15a15 15 0 0 1 15 15z" fill="#8fdcae"/>
<path d="M7 303h8M11 299v8" stroke="#8fdcae" stroke-width="2"/>
<path d="M13 309h13v14H13zM13 309l7-5h12v13l-6 6M26 309l6-5" fill="none" stroke="#8fdcae" stroke-width="1"/>
</svg>

<!-- gizmo -->
<svg class="i" style="left:1495px;top:100px" width="90" height="210" viewBox="1495 100 90 210">
<path d="M1535 120V151" stroke="#2f7fd6" stroke-width="2"/>
<path d="M1535 151 1512 150" stroke="#6d9b1e" stroke-width="2"/><path d="M1535 151 1556 148" stroke="#b5354a" stroke-width="2"/>
<circle cx="1512" cy="149" r="7.500" fill="#6d9b1e"/><circle cx="1556" cy="148" r="7.500" fill="#b5354a"/>
<circle cx="1513" cy="153" r="7.500" fill="#6b3a40" stroke="#e3324a" stroke-width="1.300"/>
<circle cx="1558" cy="152" r="7.500" fill="#5b6a34" stroke="#8fd11e" stroke-width="1.300"/>
<circle cx="1535" cy="119" r="7.500" fill="#2f7fd6"/>
<circle cx="1535" cy="183" r="7" fill="#3d5570" stroke="#2f7fd6" stroke-width="1.200"/>
<text x="1535" y="123" fill="#123" font-size="11" font-weight="bold" text-anchor="middle" font-family="Liberation Sans, sans-serif">Z</text>
<circle cx="1563" cy="206" r="13.500" fill="#2b2b2b"/><circle cx="1563" cy="236" r="13.500" fill="#2b2b2b"/><circle cx="1563" cy="266" r="13.500" fill="#2b2b2b"/><circle cx="1563" cy="296" r="13.500" fill="#2b2b2b"/>
<circle cx="1565" cy="204" r="5" fill="#ddd"/><path d="M1562 207l-6 6" stroke="#ddd" stroke-width="2"/><path d="M1562 204h6M1565 201v6" stroke="#222"/>
<path d="M1558 242c-2-4-3-6-2-6l2.500 3v-7h1.500v6-7.500h1.700v7.500-6.500h1.600v7-5h1.500v7l2-2c1 0 1 1 0 2l-3 4h-5z" fill="#ddd" stroke="#ddd"/>
<path d="M1558 258h9a2.500 2.500 0 0 1 0 6h-9a2.500 2.500 0 0 1 0-6zM1558 267h7v6h-7zM1565 270l4-2v5z" fill="none" stroke="#ddd"/>
<path d="M1558 289h10l3 13h-16zM1563 289v13M1556 295h14" fill="none" stroke="#ddd"/>
<path d="M1584 114h-3a4 4 0 0 0-4 4v8a4 4 0 0 0 4 4h3z" fill="#333"/>
<path d="M1584 118l-3 4 3 4" stroke="#aaa" fill="none"/>
</svg>

<!-- Outliner -->
<div class="b" style="left:1588px;top:50px;width:332px;height:309px;background:#282828;border-radius:5px;border:1px solid #2e2e2e"></div>
<div class="b d" style="left:1596px;top:52px;width:32px;height:19px;background:#242424;border:1px solid #3a3a3a"></div>
<svg class="i" style="left:1600px;top:54px" width="15" height="15" viewBox="0 0 15 15"><rect x="1" y="0" width="5" height="3" fill="#ddd"/><path d="M3 3v10h3M3 8h3" stroke="#ddd" fill="none"/><rect x="7" y="6" width="7" height="2.500" fill="#ddd"/><rect x="7" y="11" width="7" height="2.500" fill="#ddd"/></svg>
<svg class="i" style="left:1617px;top:59px" width="9" height="6"><use href="#cd"/></svg>
<div class="b d" style="left:1633px;top:52px;width:31px;height:19px;background:#242424;border:1px solid #3a3a3a"></div>
<svg class="i" style="left:1637px;top:55px" width="14" height="14"><use href="#vl"/></svg>
<svg class="i" style="left:1653px;top:59px" width="9" height="6"><use href="#cd"/></svg>
<div class="b d" style="left:1683px;top:52px;width:118px;height:19px;background:#1f1f1f;border:1px solid #3a3a3a"></div>
<svg class="i" style="left:1688px;top:55px" width="14" height="14"><use href="#search"/></svg>
<div class="t" style="left:1709px;top:55px;color:#6d6d6d">Search</div>
<div class="b d" style="left:1855px;top:52px;width:32px;height:19px;background:#242424;border:1px solid #3a3a3a"></div>
<svg class="i" style="left:1859px;top:54px" width="14" height="15" viewBox="0 0 14 15"><path d="M.5 1h13L8.500 7v7l-3-2V7z" fill="none" stroke="#ddd"/></svg>
<svg class="i" style="left:1876px;top:59px" width="9" height="6"><use href="#cd"/></svg>
<div class="b g" style="left:1892px;top:52px;width:19px;height:19px;background:#4e4e4e"></div>
<svg class="i" style="left:1894px;top:54px" width="15" height="15" viewBox="0 0 15 15"><path d="M1 4h8M1 4v10h9V7M4 8h3" stroke="#bbb" fill="none"/><path d="M11.500 0v6M8.500 3h6" stroke="#eee" stroke-width="1.500"/></svg>

<div class="row" style="top:116px;background:#2b2b2b"></div>
<div class="row" style="top:156px;background:#2b2b2b"></div>
<div class="row" style="top:236px;background:#2b2b2b"></div>
<div class="row" style="top:276px;background:#2b2b2b"></div>
<div class="row" style="top:316px;background:#2b2b2b"></div>
<div class="row" style="top:196px;background:#304a79"></div>
<div class="b" style="left:1618px;top:121px;width:1px;height:150px;background:#555"></div>

<svg class="i" style="left:1611px;top:79px;color:#ddd" width="14" height="14"><use href="#coll"/></svg>
<div class="t" style="left:1632px;top:80px;color:#b5b5b5">Scene Collection</div>
<svg class="i" style="left:1613px;top:103px" width="11" height="7"><use href="#cd"/></svg>
<div class="b" style="left:1629px;top:97px;width:19px;height:19px;background:#4d4d4d;border:1px solid #7a7a7a;border-radius:4px"></div>
<svg class="i" style="left:1632px;top:100px" width="13" height="13"><use href="#coll"/></svg>
<div class="t" style="left:1652px;top:100px;color:#e0e0e0">Collection</div>
<div class="b" style="left:1855px;top:101px;width:10px;height:10px;background:#ddd;border-radius:1px"></div>
<svg class="i" style="left:1856px;top:102px" width="9" height="9" viewBox="0 0 9 9"><path d="M1.500 4.500 3.500 7 7.500 1.500" stroke="#222" stroke-width="1.500" fill="none"/></svg>

<svg class="i" style="left:1634px;top:121px" width="7" height="11"><use href="#cr"/></svg>
<svg class="i" style="left:1634px;top:141px" width="7" height="11"><use href="#cr"/></svg>
<svg class="i" style="left:1634px;top:161px" width="7" height="11"><use href="#cr"/></svg>
<svg class="i" style="left:1634px;top:181px" width="7" height="11"><use href="#cr"/></svg>
<svg class="i" style="left:1634px;top:201px" width="7" height="11"><use href="#cr"/></svg>
<svg class="i" style="left:1633px;top:224px" width="11" height="7"><use href="#cd"/></svg>
<svg class="i" style="left:1654px;top:262px" width="7" height="11"><use href="#cr"/></svg>

<svg class="i" style="left:1651px;top:119px" width="14" height="14"><use href="#tri"/></svg>
<svg class="i" style="left:1651px;top:139px" width="14" height="14"><use href="#oimg"/></svg>
<svg class="i" style="left:1651px;top:159px" width="14" height="14"><use href="#oimg"/></svg>
<svg class="i" style="left:1651px;top:179px" width="14" height="14"><use href="#oimg"/></svg>
<div class="b" style="left:1648px;top:197px;width:20px;height:18px;background:#5a78a8;border:1px solid #6f8bb8;border-radius:4px"></div>
<svg class="i" style="left:1651px;top:199px" width="14" height="14" viewBox="0 0 14 14"><rect width="14" height="14" fill="#d6925a"/><path d="M2 13 7 4l5 9z" fill="#334f80"/></svg>
<svg class="i" style="left:1651px;top:219px" width="14" height="14"><use href="#tri"/></svg>

<div class="t" style="left:1672px;top:120px">Cylinder</div>
<div class="t" style="left:1672px;top:140px">Empty</div>
<div class="t" style="left:1672px;top:160px">Empty.001</div>
<div class="t" style="left:1672px;top:180px">Empty.002</div>
<div class="t" style="left:1672px;top:200px;color:#f5a623">Empty.003</div>
<div class="t" style="left:1672px;top:220px">Plane</div>
<div class="t" style="left:1692px;top:240px">Plane</div>
<div class="t" style="left:1692px;top:260px">Modifiers</div>

<svg class="i" style="left:1739px;top:119px" width="14" height="14"><use href="#mesh"/></svg>
<svg class="i" style="left:1729px;top:139px" width="14" height="14"><use href="#dimg"/></svg>
<svg class="i" style="left:1753px;top:159px" width="14" height="14"><use href="#dimg"/></svg>
<svg class="i" style="left:1753px;top:179px" width="14" height="14"><use href="#dimg"/></svg>
<svg class="i" style="left:1753px;top:199px" width="14" height="14"><use href="#dimg"/></svg>
<svg class="i" style="left:1671px;top:239px" width="14" height="14"><use href="#mesh"/></svg>
<svg class="i" style="left:1671px;top:259px" width="14" height="15" viewBox="0 0 14 15"><path d="M11 1.500a3.500 3.500 0 0 0-4 4.500L1.500 11.500a1.800 1.800 0 0 0 2.500 2.500L9.500 8.500a3.500 3.500 0 0 0 4-4.500L11 6 9 5z" fill="none" stroke="#5b84c9" stroke-width="1.100"/></svg>
<div class="b" style="left:1762px;top:257px;width:20px;height:19px;background:#555;border-radius:4px"></div>
<svg class="i" style="left:1765px;top:260px" width="14" height="13" viewBox="0 0 14 13"><path d="M6 1C3 1 1 2 1 6s2 6 5 6M8 1c3 0 5 1 5 5s-2 6-5 6M7 0v13" fill="none" stroke="#5b84c9" stroke-dasharray="3 1"/></svg>

<svg class="i" style="left:1874px;top:100px" width="13" height="13"><use href="#eye"/></svg><svg class="i" style="left:1894px;top:100px" width="13" height="13"><use href="#cam"/></svg>
<svg class="i" style="left:1874px;top:120px" width="13" height="13"><use href="#eye"/></svg><svg class="i" style="left:1894px;top:120px" width="13" height="13"><use href="#cam"/></svg>
<svg class="i" style="left:1874px;top:140px" width="13" height="13"><use href="#eye"/></svg><svg class="i" style="left:1894px;top:140px" width="13" height="13"><use href="#cam"/></svg>
<svg class="i" style="left:1874px;top:160px" width="13" height="13"><use href="#eye"/></svg><svg class="i" style="left:1894px;top:160px" width="13" height="13"><use href="#cam"/></svg>
<svg class="i" style="left:1874px;top:180px" width="13" height="13"><use href="#eye"/></svg><svg class="i" style="left:1894px;top:180px" width="13" height="13"><use href="#cam"/></svg>
<svg class="i" style="left:1874px;top:200px" width="13" height="13"><use href="#eye"/></svg><svg class="i" style="left:1894px;top:200px" width="13" height="13"><use href="#cam"/></svg>
<svg class="i" style="left:1874px;top:220px" width="13" height="13"><use href="#eye"/></svg><svg class="i" style="left:1894px;top:220px" width="13" height="13"><use href="#cam"/></svg>

<!-- Properties -->
<div class="b" style="left:1588px;top:362px;width:332px;height:647px;background:#2f2f2f;border-radius:5px 5px 0 0"></div>
<div class="b" style="left:1588px;top:389px;width:28px;height:620px;background:#1f1f1f"></div>
<div class="b" style="left:1590px;top:700px;width:26px;height:36px;background:#2f2f2f;border-radius:5px 0 0 5px"></div>
<div class="b d" style="left:1597px;top:365px;width:31px;height:18px;background:#2a2a2a;border:1px solid #3d3d3d"></div>
<svg class="i" style="left:1601px;top:367px" width="14" height="14" viewBox="0 0 14 14"><rect x="0" y="1" width="14" height="5.500" rx="2.700" fill="#eee"/><rect x="0" y="8" width="14" height="5.500" rx="2.700" fill="#eee"/><circle cx="10.500" cy="3.700" r="1.700" fill="#333"/><circle cx="3.500" cy="10.700" r="1.700" fill="#333"/></svg>
<svg class="i" style="left:1617px;top:371px" width="9" height="6"><use href="#cd"/></svg>
<div class="b d" style="left:1696px;top:365px;width:117px;height:18px;background:#1f1f1f;border:1px solid #3d3d3d"></div>
<svg class="i" style="left:1700px;top:367px" width="14" height="14"><use href="#search"/></svg>
<div class="t" style="left:1721px;top:367px;color:#6d6d6d">Search</div>
<div class="b d" style="left:1893px;top:365px;width:18px;height:18px;background:#2a2a2a;border:1px solid #3d3d3d"></div>
<svg class="i" style="left:1898px;top:371px" width="9" height="6"><use href="#cd"/></svg>

<svg class="i" style="left:1596px;top:400px" width="14" height="340" viewBox="0 0 14 340">
<path d="M3 1v6M11 1c-2 1-2 3-1 4v9h2V5c1-1 1-3-1-4M1 8h4v6H1z" fill="#ddd" stroke="#ddd"/>
<path d="M3 37h1l1-2h4l1 2h3v10H1V37z" fill="#bbb"/><rect x="3" y="39" width="6" height="1.500" fill="#222"/><rect x="3" y="42" width="6" height="1.500" fill="#222"/>
<path d="M3 66h8v3h2v8H1v-8h2z" fill="#bbb"/><rect x="4" y="72" width="6" height="5" fill="#444"/>
<use href="#vl" width="14" height="14" y="94"/>
<use href="#scene" width="14" height="14" y="121"/>
<circle cx="7" cy="157" r="6.500" fill="none" stroke="#b5414f" stroke-width="1.200"/><path d="M2 155c3 2 3-3 6-2s1 3 4 1M5 161c2 0 3-2 5-1" stroke="#b5414f" fill="none" stroke-width="1.500"/>
<rect y="186" width="14" height="3.500" fill="#ddd"/><rect x="1" y="190.500" width="12" height="9" fill="none" stroke="#ddd"/><rect x="5" y="192" width="4" height="1.500" fill="#ddd"/>
<rect x="3" y="224" width="8" height="8" fill="#d0884c"/><path d="M0 223v-2h3M11 221h3v2M14 233v2h-3M3 235H0v-2" fill="none" stroke="#d0884c" stroke-width="1"/>
<circle cx="6.500" cy="257" r="6" fill="none" stroke="#5b84c9" stroke-width="1.300"/><circle cx="6.500" cy="257" r="2.800" fill="#5b84c9"/><circle cx="12" cy="251.500" r="1.600" fill="#5b84c9"/>
<path d="M2 286 10 278a2.500 2.500 0 0 1 3 3l-8 10a3 3 0 0 1-4-4z" fill="none" stroke="#5b84c9" stroke-width="1.300"/><circle cx="5" cy="286" r="2" fill="#5b84c9"/>
<use href="#dimg" width="14" height="14" y="306"/>
</svg>

<svg class="i" style="left:1627px;top:398px" width="14" height="14" viewBox="0 0 16 16"><path d="M1 4V1h3M12 1h3v3M15 12v3h-3M4 15H1v-3" fill="none" stroke="#ddd"/><rect x="4" y="4" width="8" height="8" fill="#ddd"/></svg>
<div class="t" style="left:1650px;top:398px;color:#ccc">Em...</div>
<svg class="i" style="left:1685px;top:400px" width="7" height="10"><use href="#cr"/></svg>
<svg class="i" style="left:1701px;top:398px;color:#ddd" width="14" height="14"><use href="#img"/></svg>
<div class="t" style="left:1724px;top:398px;color:#ccc">WhatsApp I...17.36 (1).jpeg</div>
<svg class="i" style="left:1895px;top:398px" width="14" height="14"><use href="#pin"/></svg>

<!-- Empty panel -->
<div class="b" style="left:1624px;top:425px;width:288px;height:268px;background:#3d3d3d;border-radius:5px"></div>
<svg class="i" style="left:1633px;top:435px" width="10" height="7"><use href="#cd"/></svg>
<div class="t" style="left:1646px;top:431px;color:#ddd">Empty</div>
<div class="b" style="left:1895px;top:435px;width:10px;height:5px;background:repeating-linear-gradient(90deg,#888 0 1px,transparent 1px 3px)"></div>

<div class="t r" style="left:1628px;width:100px;top:461px">Display As</div>
<div class="b" style="left:1738px;top:459px;width:145px;height:18px;background:#1e1e1e;border-radius:3px"></div>
<svg class="i" style="left:1742px;top:461px;color:#ddd" width="14" height="14"><use href="#img"/></svg>
<div class="t" style="left:1763px;top:461px;color:#ddd">Image</div>
<svg class="i" style="left:1873px;top:466px" width="9" height="6"><use href="#cd"/></svg>

<div class="t r" style="left:1628px;width:100px;top:486px">Size</div>
<div class="b g" style="left:1738px;top:484px;width:145px;height:18px"></div>
<div class="t c" style="left:1738px;width:145px;top:486px;color:#ddd">5 m</div>

<div class="t r" style="left:1628px;width:100px;top:511px">Offset X</div>
<div class="b g" style="left:1738px;top:509px;width:145px;height:18px;border-radius:3px 3px 0 0"></div>
<div class="t c" style="left:1738px;width:145px;top:511px;color:#ddd">-0.50</div>
<div class="t r" style="left:1628px;width:100px;top:531px">Y</div>
<div class="b g" style="left:1738px;top:528px;width:145px;height:19px;border-radius:0 0 3px 3px"></div>
<div class="t c" style="left:1738px;width:145px;top:530px;color:#ddd">-0.50</div>

<div class="t r" style="left:1628px;width:100px;top:556px">Depth</div>
<div class="b g" style="left:1738px;top:554px;width:145px;height:18px"></div>
<div class="b" style="left:1738px;top:554px;width:47px;height:18px;background:#4772b3;border-radius:3px 0 0 3px"></div>
<div class="b" style="left:1834px;top:554px;width:1px;height:18px;background:#3d3d3d"></div>
<div class="t c" style="left:1738px;width:47px;top:556px;color:#fff">Default</div>
<div class="t c" style="left:1786px;width:48px;top:556px;color:#ddd">Front</div>
<div class="t c" style="left:1835px;width:48px;top:556px;color:#ddd">Back</div>

<div class="t r" style="left:1628px;width:100px;top:578px">Side</div>
<div class="b g" style="left:1738px;top:576px;width:145px;height:18px"></div>
<div class="b" style="left:1738px;top:576px;width:47px;height:18px;background:#4772b3;border-radius:3px 0 0 3px"></div>
<div class="b" style="left:1834px;top:576px;width:1px;height:18px;background:#3d3d3d"></div>
<div class="t c" style="left:1738px;width:47px;top:578px;color:#fff">Both</div>
<div class="t c" style="left:1786px;width:48px;top:578px;color:#ddd">Front</div>
<div class="t c" style="left:1835px;width:48px;top:578px;color:#ddd">Back</div>

<div class="t r" style="left:1628px;width:100px;top:603px">Show In</div>
<div class="b" style="left:1738px;top:604px;width:12px;height:12px;background:#4772b3;border-radius:2px"></div>
<svg class="i" style="left:1739px;top:605px" width="10" height="10" viewBox="0 0 10 10"><path d="M1.500 5 4 8 8.500 2" stroke="#fff" stroke-width="1.500" fill="none"/></svg>
<div class="t" style="left:1754px;top:603px;color:#ddd">Orthographic</div>
<div class="b" style="left:1738px;top:624px;width:12px;height:12px;background:#4772b3;border-radius:2px"></div>
<svg class="i" style="left:1739px;top:625px" width="10" height="10" viewBox="0 0 10 10"><path d="M1.500 5 4 8 8.500 2" stroke="#fff" stroke-width="1.500" fill="none"/></svg>
<div class="t" style="left:1754px;top:623px;color:#ddd">Perspective</div>
<div class="b g" style="left:1738px;top:644px;width:12px;height:12px;border-radius:2px"></div>
<div class="t" style="left:1754px;top:643px;color:#aaa">Only Axis Aligned</div>

<div class="t r" style="left:1628px;width:100px;top:668px">Opacity</div>
<div class="b" style="left:1738px;top:669px;width:12px;height:12px;background:#4772b3;border-radius:2px"></div>
<svg class="i" style="left:1739px;top:670px" width="10" height="10" viewBox="0 0 10 10"><path d="M1.500 5 4 8 8.500 2" stroke="#fff" stroke-width="1.500" fill="none"/></svg>
<div class="b g" style="left:1758px;top:666px;width:125px;height:18px"></div>
<div class="b" style="left:1758px;top:666px;width:48px;height:18px;background:#4772b3;border-radius:3px 0 0 3px"></div>
<div class="t c" style="left:1758px;width:125px;top:668px;color:#eee">0.400</div>

<div class="dot" style="top:466px"></div><div class="dot" style="top:491px"></div><div class="dot" style="top:516px"></div><div class="dot" style="top:536px"></div><div class="dot" style="top:561px"></div><div class="dot" style="top:583px"></div><div class="dot" style="top:608px"></div><div class="dot" style="top:628px"></div><div class="dot" style="top:648px"></div><div class="dot" style="top:673px"></div>

<!-- Image panel -->
<div class="b" style="left:1624px;top:695px;width:288px;height:157px;background:#3d3d3d;border-radius:5px"></div>
<svg class="i" style="left:1633px;top:705px" width="10" height="7"><use href="#cd"/></svg>
<div class="t" style="left:1646px;top:701px;color:#ddd">Image</div>
<div class="b" style="left:1895px;top:705px;width:10px;height:5px;background:repeating-linear-gradient(90deg,#888 0 1px,transparent 1px 3px)"></div>

<div class="b" style="left:1633px;top:729px;width:270px;height:18px;background:#555;border-radius:3px"></div>
<div class="b" style="left:1633px;top:729px;width:29px;height:18px;background:#282828;border-radius:3px 0 0 3px"></div>
<div class="b" style="left:1664px;top:729px;width:155px;height:18px;background:#1e1e1e"></div>
<svg class="i" style="left:1637px;top:731px;color:#ddd" width="14" height="14"><use href="#img"/></svg>
<svg class="i" style="left:1653px;top:736px" width="9" height="6"><use href="#cd"/></svg>
<div class="t" style="left:1671px;top:731px;color:#ddd">WhatsApp I...7.36 (1).jpeg</div>
<div class="t c" style="left:1820px;width:23px;top:731px;color:#ddd">3</div>
<div class="b" style="left:1843px;top:729px;width:1px;height:18px;background:#3d3d3d"></div>
<div class="b" style="left:1863px;top:729px;width:1px;height:18px;background:#3d3d3d"></div>
<div class="b" style="left:1883px;top:729px;width:1px;height:18px;background:#3d3d3d"></div>
<svg class="i" style="left:1847px;top:731px" width="13" height="14" viewBox="0 0 13 14"><path d="M6.500 1C5 2 3 2.500 1 2.500 1 8 2.500 11 6.500 13 10.500 11 12 8 12 2.500 10 2.500 8 2 6.500 1z" fill="none" stroke="#aaa"/></svg>
<svg class="i" style="left:1867px;top:731px" width="14" height="14"><use href="#folder"/></svg>
<svg class="i" style="left:1889px;top:733px;color:#ddd" width="9" height="9"><use href="#x"/></svg>

<div class="t r" style="left:1628px;width:108px;top:767px">Source</div>
<div class="b" style="left:1746px;top:765px;width:157px;height:18px;background:#1e1e1e;border-radius:3px"></div>
<div class="t" style="left:1753px;top:767px;color:#ddd">Single Image</div>
<svg class="i" style="left:1893px;top:771px" width="9" height="6"><use href="#cd"/></svg>

<div class="b" style="left:1633px;top:795px;width:270px;height:18px;background:#555;border-radius:3px"></div>
<div class="b" style="left:1652px;top:795px;width:211px;height:18px;background:#1e1e1e"></div>
<svg class="i" style="left:1635px;top:797px" width="15" height="14" viewBox="0 0 15 14"><path d="M1 11 4 4h10l-3 7zM1 11v1h10v-1M14 4v1l-3 7" fill="none" stroke="#ddd"/></svg>
<div class="t" style="left:1659px;top:797px;color:#ddd">//..\..\..\Download... 14.17.36 (1).jpeg</div>
<svg class="i" style="left:1867px;top:797px" width="14" height="14"><use href="#folder"/></svg>
<div class="b" style="left:1883px;top:795px;width:1px;height:18px;background:#3d3d3d"></div>
<svg class="i" style="left:1887px;top:797px" width="14" height="14" viewBox="0 0 14 14"><path d="M1 6a6 6 0 0 1 11-2M13 8a6 6 0 0 1-11 2M12 1v3H9M2 13v-3h3" fill="none" stroke="#ddd"/></svg>

<div class="t r" style="left:1628px;width:108px;top:827px">Color Space</div>
<div class="b" style="left:1746px;top:825px;width:157px;height:18px;background:#1e1e1e;border-radius:3px"></div>
<div class="t" style="left:1753px;top:827px;color:#ddd">sRGB</div>
<svg class="i" style="left:1893px;top:831px" width="9" height="6"><use href="#cd"/></svg>

<!-- Timeline -->
<div class="b" style="left:1px;top:948px;width:1584px;height:61px;background:#2a2a2a;border-radius:5px 5px 0 0;overflow:hidden">
<div style="position:absolute;left:0;top:0;width:100%;height:25px;background:#303030"></div>
<div style="position:absolute;left:0;top:25px;width:100%;height:23px;background:#1e1e1e"></div>
<div style="position:absolute;left:0;top:48px;width:100%;height:13px;background-image:repeating-linear-gradient(90deg,#1a1a1a 0 1px,transparent 1px 43.530px);background-position:4.500px 0"></div>
<div style="position:absolute;left:264px;top:59px;width:1056px;height:2px;background:#555"></div>
</div>
<div class="b d" style="left:9px;top:952px;width:31px;height:19px;background:#262626;border:1px solid #3a3a3a"></div>
<svg class="i" style="left:13px;top:954px" width="15" height="15" viewBox="0 0 15 15"><circle cx="7.500" cy="7.500" r="7" fill="#ddd"/><path d="M7.500 7.500 13 3v9z" fill="#262626"/></svg>
<svg class="i" style="left:30px;top:959px" width="9" height="6"><use href="#cd"/></svg>
<div class="b d" style="left:46px;top:952px;width:132px;height:19px;background:#262626;border:1px solid #3a3a3a"></div>
<div class="b" style="left:116px;top:952px;width:1px;height:19px;background:#3a3a3a"></div>
<div class="t" style="left:53px;top:954px">Playback</div>
<svg class="i" style="left:106px;top:959px" width="9" height="6"><use href="#cd"/></svg>
<div class="t" style="left:124px;top:954px">Keying</div>
<svg class="i" style="left:166px;top:959px" width="9" height="6"><use href="#cd"/></svg>
<div class="t" style="left:187px;top:954px">View</div>
<div class="t" style="left:228px;top:954px">Marker</div>
<div class="b" style="left:701px;top:952px;width:39px;height:19px;background:#262626;border-radius:4px"></div>
<div class="b" style="left:701px;top:952px;width:20px;height:19px;background:#4e4e4e;border-radius:4px 0 0 4px"></div>
<svg class="i" style="left:704px;top:955px" width="13" height="13" viewBox="0 0 13 13"><circle cx="6.500" cy="6.500" r="5" fill="none" stroke="#999"/></svg>
<svg class="i" style="left:724px;top:959px;opacity:.4" width="9" height="6"><use href="#cd"/></svg>
<div class="b" style="left:746px;top:952px;width:117px;height:19px;background:#4e4e4e;border-radius:4px"></div>
<svg class="i" style="left:746px;top:952px" width="117" height="19" viewBox="0 0 117 19">
<path d="M6 4.500v10M15 4.500v10l-7-5z" stroke="#eee" fill="#eee"/>
<path d="M21 9.500l4-5v10zM26 9.500l4-5 4 5-4 5z" fill="#eee"/>
<path d="M49 3.500v12l-8-6z" fill="#eee"/>
<path d="M61 2.500v14l9-7z" fill="#eee"/>
<path d="M83 4.500l4 5-4 5zM88 9.500l4-5 4 5-4 5z" fill="#eee"/>
<path d="M103 4.500v10l7-5zM111 4.500v10" stroke="#eee" fill="#eee"/>
</svg>
<div class="b g" style="left:1304px;top:952px;width:74px;height:19px"></div>
<div class="t c" style="left:1304px;width:74px;top:954px;color:#ddd">24</div>
<div class="b g" style="left:1385px;top:952px;width:193px;height:19px"></div>
<div class="b" style="left:1385px;top:952px;width:19px;height:19px;background:#4772b3;border-radius:3px 0 0 3px"></div>
<svg class="i" style="left:1387px;top:953px" width="15" height="16" viewBox="0 0 15 16"><circle cx="7.500" cy="9" r="6" fill="none" stroke="#eee" stroke-width="1.200"/><path d="M5 1h5M7.500 1v2M7.500 6v3h3" stroke="#eee" fill="none"/></svg>
<div class="b" style="left:1493px;top:952px;width:1px;height:19px;background:#3d3d3d"></div>
<div class="t" style="left:1418px;top:954px;color:#ddd">Start</div>
<div class="t" style="left:1472px;top:954px;color:#ddd">1</div>
<div class="t" style="left:1508px;top:954px;color:#ddd">End</div>
<div class="t" style="left:1544px;top:954px;color:#ddd;transform:translateX(-2px)">250</div>
<div class="t c" style="left:29px;width:40px;top:978px;color:#9a9a9a">40</div>
<div class="t c" style="left:116px;width:40px;top:978px;color:#9a9a9a">50</div>
<div class="t c" style="left:203px;width:40px;top:978px;color:#9a9a9a">60</div>
<div class="t c" style="left:290px;width:40px;top:978px;color:#9a9a9a">70</div>
<div class="t c" style="left:377px;width:40px;top:978px;color:#9a9a9a">80</div>
<div class="t c" style="left:464px;width:40px;top:978px;color:#9a9a9a">90</div>
<div class="t c" style="left:551px;width:40px;top:978px;color:#9a9a9a">100</div>
<div class="t c" style="left:638px;width:40px;top:978px;color:#9a9a9a">110</div>
<div class="t c" style="left:725px;width:40px;top:978px;color:#9a9a9a">120</div>
<div class="t c" style="left:812px;width:40px;top:978px;color:#9a9a9a">130</div>
<div class="t c" style="left:899px;width:40px;top:978px;color:#9a9a9a">140</div>
<div class="t c" style="left:986px;width:40px;top:978px;color:#9a9a9a">150</div>
<div class="t c" style="left:1073px;width:40px;top:978px;color:#9a9a9a">160</div>
<div class="t c" style="left:1160px;width:40px;top:978px;color:#9a9a9a">170</div>
<div class="t c" style="left:1247px;width:40px;top:978px;color:#9a9a9a">180</div>
<div class="t c" style="left:1334px;width:40px;top:978px;color:#9a9a9a">190</div>
<div class="t c" style="left:1421px;width:40px;top:978px;color:#9a9a9a">200</div>
<div class="t c" style="left:1508px;width:40px;top:978px;color:#9a9a9a">210</div>
<svg class="i" style="left:1px;top:991px" width="5" height="9"><path d="M1 1l3 3.500-3 3.500" fill="none" stroke="#888"/></svg>
<svg class="i" style="left:1578px;top:990px" width="6" height="9"><path d="M5 1 1 4.500 5 8" fill="none" stroke="#888"/></svg>
</body></html>
